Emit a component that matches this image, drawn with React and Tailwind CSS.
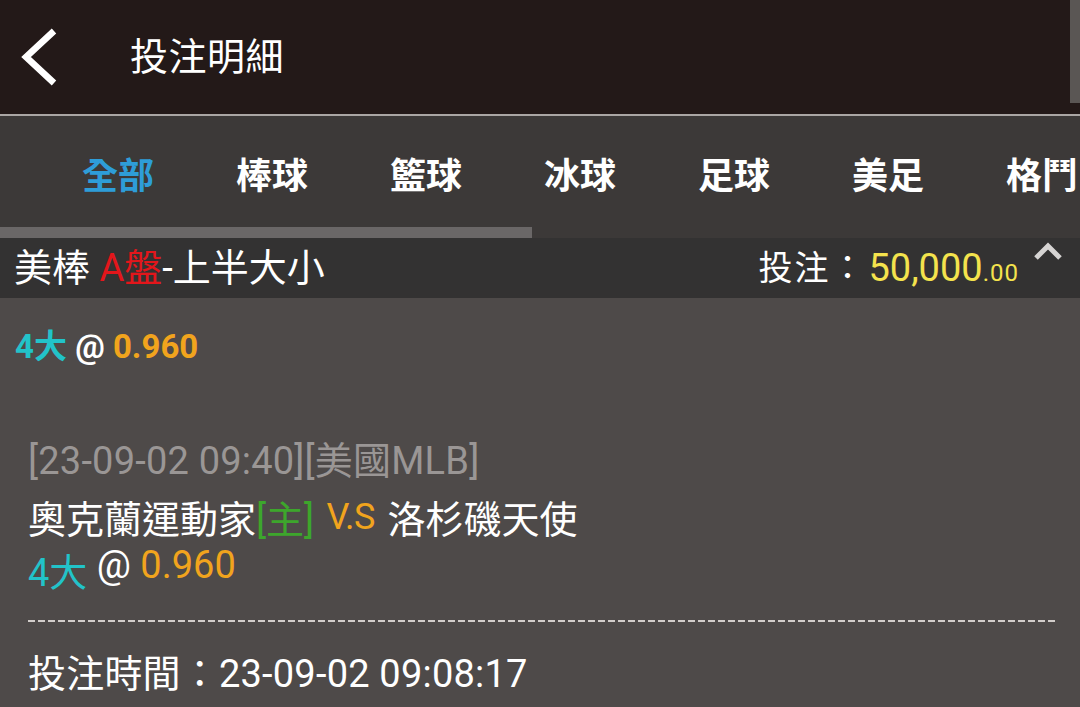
export default function App() {
  const tabs = ['全部', '棒球', '籃球', '冰球', '足球', '美足', '格鬥']

  return (
    <div className="w-[1080px] h-[707px] overflow-hidden bg-[#4e4a49] text-white font-['Roboto','Noto_Sans_CJK_TC',sans-serif]">
      {/* top bar */}
      <div className="relative h-[114px] bg-[#231918] flex items-center">
        <svg className="ml-[20px] w-[40px] h-[60px]" viewBox="0 0 40 60">
          <polyline points="34,4 6,30 34,56" fill="none" stroke="#fff" strokeWidth="6.5" />
        </svg>
        <h1 className="ml-[70px] text-[38px] leading-none tracking-[0.5px]">投注明細</h1>
        <div className="absolute right-0 top-0 w-[10px] h-[103px] bg-[#5a5654]" />
      </div>
      <div className="h-[2px] bg-[#aaa6a4]" />

      {/* sport tabs */}
      <div className="h-[111px] bg-[#3c3938] flex items-center pl-[41px] pt-[10px] overflow-hidden whitespace-nowrap">
        {tabs.map((t, i) => (
          <div
            key={t}
            className={`shrink-0 w-[154px] text-center text-[36px] font-bold leading-none ${i === 0 ? 'text-[#2e9dd8]' : 'text-white'}`}
          >
            {t}
          </div>
        ))}
      </div>
      <div className="h-[11px] bg-[#3c3938]">
        <div className="w-[532px] h-full bg-[#6a6767]" />
      </div>

      {/* bet header */}
      <div className="h-[60px] bg-[#333232] flex items-center justify-between pl-[14px]">
        <div className="text-[38px] leading-none whitespace-nowrap">
          美棒 <span className="text-[#e3161b]">A盤</span>-上半大小
        </div>
        <div className="flex items-center h-full pr-[17px]">
          <span className="text-[34px] leading-none tracking-[2px]">投注：</span>
          <span className="ml-[2px] text-[38px] leading-none text-[#f4e34d]">50,000</span>
          <span className="text-[24px] leading-none text-[#f4e34d] mt-[9px] tracking-[1px]">.00</span>
          <svg className="self-start mt-[4px] ml-[14px] w-[30px] h-[20px]" viewBox="0 0 30 20">
            <polyline points="3,16 15,4 27,16" fill="none" stroke="#d6d4d3" strokeWidth="5" />
          </svg>
        </div>
      </div>

      {/* summary */}
      <div className="mt-[29px] pl-[15px] h-[40px] leading-[40px] text-[33px] font-bold whitespace-nowrap">
        <span className="text-[#22c3c9]">4大</span> @ <span className="text-[#f1a41d]">0.960</span>
      </div>

      {/* detail */}
      <div className="px-[28px] mt-[69px] whitespace-nowrap">
        <div className="h-[50px] leading-[50px] text-[38px] tracking-[0.2px] text-[#9a9695]">[23-09-02 09:40][美國MLB]</div>
        <div className="mt-[7px] h-[48px] leading-[48px] text-[38px]">
          奧克蘭運動家<span className="text-[#3da62c]">[主]</span>{' '}
          <span className="inline-block mx-[3px] text-[36px] text-[#f1a41d] align-[4px] tracking-[-0.5px]">V.S</span> 洛杉磯天使
        </div>
        <div className="h-[48px] leading-[48px] text-[38px]">
          <span className="text-[#22c3c9] inline-block align-[-8px]">4大</span> @ <span className="text-[#f1a41d]">0.960</span>
        </div>
      </div>

      <div className="ml-[28px] mr-[25px] mt-[31px] h-[2px] bg-[repeating-linear-gradient(to_right,#d2cdca_0_7px,transparent_7px_10px)]" />

      <div className="px-[28px] mt-[27px] h-[50px] leading-[50px] text-[38px] tracking-[0.2px] whitespace-nowrap">
        投注時間：23-09-02 09:08:17
      </div>
    </div>
  )
}
